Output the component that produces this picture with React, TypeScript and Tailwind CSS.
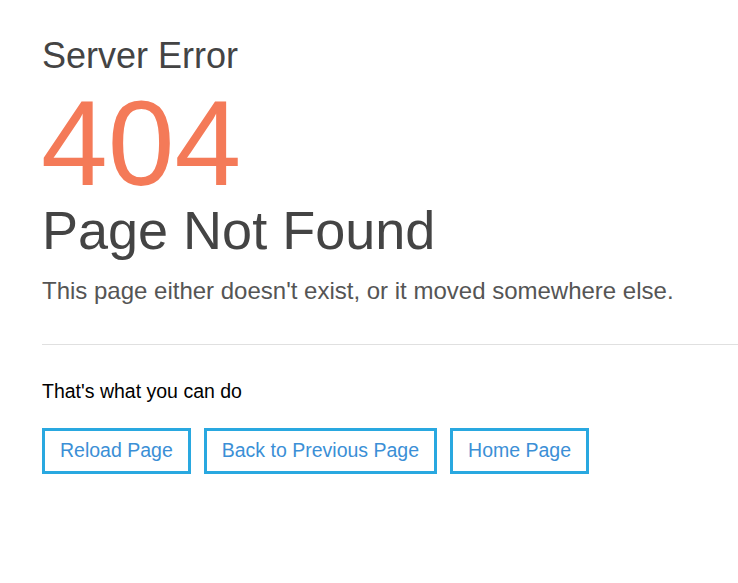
export default function App() {
  const btn =
    "border-[3px] border-[#29a8e0] px-[15px] h-[46px] flex items-center text-[19.5px] text-[#3b8fd6]";
  return (
    <div className="min-h-screen bg-white pl-[42px] pt-[36px] text-[#444]" style={{ fontFamily: '"Liberation Sans", Arial, sans-serif' }}>
      <h2 className="text-[36px] leading-[40px] text-[#444]">Server Error</h2>
      <h1 className="mt-[7px] text-[120px] leading-[120px] text-[#f47a58] -ml-[1px]">404</h1>
      <h3 className="text-[54px] leading-[54px] text-[#444]">Page Not Found</h3>
      <p className="mt-[19px] text-[24px] leading-[30px] text-[#555]">This page either doesn't exist, or it moved somewhere else.</p>
      <hr className="mt-[38px] border-t border-[#e0e0e0]" />
      <p className="mt-[34px] text-[19.5px] leading-[24px] text-black">That's what you can do</p>
      <div className="mt-[25px] flex gap-[13px]">
        <a href="#" className={btn}>Reload Page</a>
        <a href="#" className={btn}>Back to Previous Page</a>
        <a href="#" className={btn}>Home Page</a>
      </div>
    </div>
  );
}
